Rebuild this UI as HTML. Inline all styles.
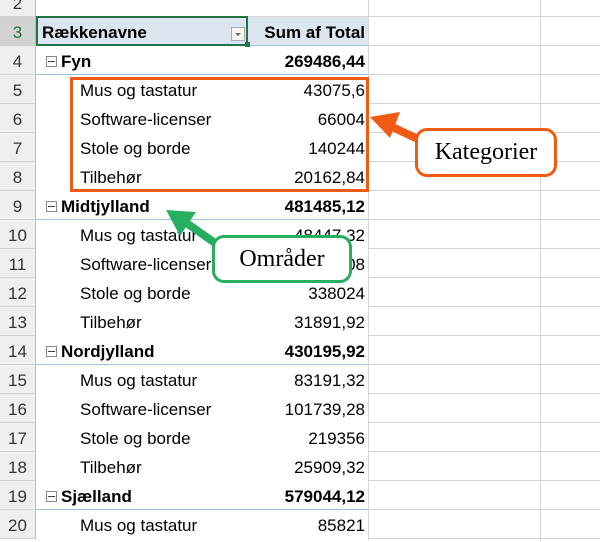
<!DOCTYPE html>
<html><head><style>
body{margin:0;width:600px;height:540px;overflow:hidden;background:#fff;font-family:"Liberation Sans",sans-serif;position:relative}
.r{position:absolute;left:0;width:600px;height:29px;box-sizing:border-box}
.g{position:absolute;left:368px;right:0;bottom:0;height:1px;background:#d4d4d4}
.h{position:absolute;left:0;top:0;width:36px;height:29px;background:#efefef;border-right:1px solid #bcbcbc;border-bottom:1px solid #d0d0d0;box-sizing:border-box;text-align:center;line-height:31px;font-size:17px;color:#333}
.a{position:absolute;top:0;font-size:17px;line-height:32px;color:#000}
.b{position:absolute;top:0;right:235px;font-size:17px;line-height:32px;color:#000}
.bold{font-weight:bold}
.v{position:absolute;top:0;bottom:0;width:1px;background:#d4d4d4}
.m{position:absolute;left:46px;top:10px;width:11px;height:11px;border:1px solid #888;box-sizing:border-box}
.m:after{content:"";position:absolute;left:1px;right:1px;top:4px;height:1px;background:#444}
.box{position:absolute;border-radius:12px;background:#fff;font-family:"Liberation Serif",serif;font-size:24px;text-align:center;box-sizing:border-box}
</style></head><body>
<div class="v" style="left:368px"></div>
<div class="v" style="left:540px"></div>
<div id="rows"></div>
<script>
var d=[[2,"",""],[3,"Rækkenavne","Sum af Total","hd"],[4,"Fyn","269486,44","L"],[5,"Mus og tastatur","43075,6"],[6,"Software-licenser","66004"],[7,"Stole og borde","140244"],[8,"Tilbehør","20162,84"],[9,"Midtjylland","481485,12","L"],[10,"Mus og tastatur","48447,32"],[11,"Software-licenser","92408"],[12,"Stole og borde","338024"],[13,"Tilbehør","31891,92"],[14,"Nordjylland","430195,92","L"],[15,"Mus og tastatur","83191,32"],[16,"Software-licenser","101739,28"],[17,"Stole og borde","219356"],[18,"Tilbehør","25909,32"],[19,"Sjælland","579044,12","L"],[20,"Mus og tastatur","85821"]];
var h="";
d.forEach(function(x){var t=17+(x[0]-3)*29;var k=x[3];
h+='<div class="r" style="top:'+t+'px"><div class="g"'+(x[0]==2?' style="left:36px"':'')+'></div>';
if(k=="hd"){h+='<div style="position:absolute;left:36px;top:0;width:332px;height:29px;background:#dce6f1;border-bottom:1px solid #9bc2e6;box-sizing:border-box"></div>';}
if(k=="L"){h+='<div style="position:absolute;left:36px;top:28px;width:332px;height:1px;background:#9bc2e6"></div>';}
h+='<div class="h" style="'+(k=="hd"?'background:#d2d2d2;color:#217346;':'')+'">'+x[0]+'</div>';
if(k=="hd"){h+='<div class="a bold" style="left:42px">'+x[1]+'</div><div class="b bold">'+x[2]+'</div>';
h+='<div style="position:absolute;left:36px;top:-1px;width:212px;height:30px;border:2px solid #217346;box-sizing:border-box"></div><div style="position:absolute;left:231px;top:10px;width:14px;height:14px;border:1px solid #aaa;background:#f4f4f4;box-sizing:border-box"><div style="position:absolute;left:3px;top:5px;border-left:3px solid transparent;border-right:3px solid transparent;border-top:3px solid #666"></div></div><div style="position:absolute;left:245px;top:25px;width:5px;height:5px;background:#217346"></div>';}
else if(k=="L"){h+='<div class="m"></div><div class="a bold" style="left:61px">'+x[1]+'</div><div class="b bold">'+x[2]+'</div>';}
else if(x[1]){h+='<div class="a" style="left:80px">'+x[1]+'</div><div class="b">'+x[2]+'</div>';}
h+='</div>';});
document.getElementById("rows").innerHTML=h;
</script>
<div style="position:absolute;left:70px;top:77px;width:299px;height:115px;border:3px solid #f15a12;box-sizing:border-box"></div>
<svg style="position:absolute;left:0;top:0" width="600" height="540">
<line x1="420" y1="140" x2="388" y2="125" stroke="#f15a12" stroke-width="8"/>
<polygon points="370,117 400,112 390,138" fill="#f15a12"/>
<line x1="215" y1="243" x2="185" y2="222" stroke="#27ae60" stroke-width="8"/>
<polygon points="166,210 196,212 180,236" fill="#27ae60"/>
</svg>
<div class="box" style="left:415px;top:128px;width:142px;height:49px;border:3px solid #f15a12;line-height:43px">Kategorier</div>
<div class="box" style="left:212px;top:235px;width:140px;height:48px;border:3px solid #27ae60;line-height:42px">Områder</div>
</body></html>
